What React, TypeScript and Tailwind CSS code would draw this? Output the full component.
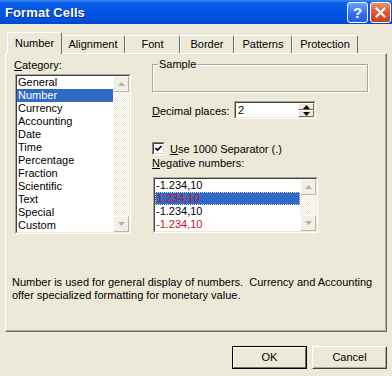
import React from "react";

const tabs = ["Number", "Alignment", "Font", "Border", "Patterns", "Protection"];
const tabWidths = ["w-[55px]", "w-[63px]", "w-[55px]", "w-[54px]", "w-[58px]", "w-[66px]"];
const categories = [
  "General",
  "Number",
  "Currency",
  "Accounting",
  "Date",
  "Time",
  "Percentage",
  "Fraction",
  "Scientific",
  "Text",
  "Special",
  "Custom",
];

function Sunken({ className, children }: { className: string; children: React.ReactNode }) {
  return (
    <div className={`border border-t-[#aca899] border-l-[#aca899] border-r-white border-b-white ${className}`}>
      <div className="h-full border border-t-[#404040] border-l-[#404040] border-r-[#ece9d8] border-b-[#ece9d8] bg-white flex">
        {children}
      </div>
    </div>
  );
}

function Arrow({ up, color }: { up?: boolean; color: string }) {
  return (
    <svg width="7" height="4" viewBox="0 0 7 4">
      <path d={up ? "M3.5 0 L7 4 L0 4 Z" : "M0 0 L7 0 L3.5 4 Z"} fill={color} />
    </svg>
  );
}

function ScrollBtn({ up }: { up?: boolean }) {
  return (
    <div className="w-[16px] h-[16px] bg-[#f2f0e6] border border-t-[#fdfdfb] border-l-[#fdfdfb] border-r-[#b9b7aa] border-b-[#b9b7aa] flex items-center justify-center">
      <Arrow up={up} color="#b5b2a4" />
    </div>
  );
}

function ScrollBar() {
  return (
    <div className="w-[16px] h-full flex flex-col justify-between bg-[repeating-conic-gradient(#ece9d8_0_25%,#ffffff_0_50%)] bg-[length:2px_2px]">
      <ScrollBtn up />
      <ScrollBtn />
    </div>
  );
}

export default function App() {
  return (
    <div
      className="w-[392px] h-[376px] bg-[#ece9d8] overflow-hidden text-[11px] leading-[13px] text-black"
      style={{ fontFamily: '"Liberation Sans", Arial, sans-serif' }}
    >
      {/* title bar */}
      <div className="h-[24px] flex items-center justify-between pl-[5px] pr-[1px] bg-[linear-gradient(to_bottom,#3d8cf5_0%,#0a5ee8_12%,#0055e5_50%,#0150dd_85%,#0146c9_100%)]">
        <span className="text-white font-bold text-[13px] tracking-[0.1px] [text-shadow:1px_1px_0_#0a2a80]">
          Format Cells
        </span>
        <div className="flex gap-[2px]">
          <div className="w-[21px] h-[21px] rounded-[3px] border border-white bg-[linear-gradient(to_bottom,#6aa2ff,#2c6cf0_60%,#2a5fe0)] flex items-center justify-center text-white font-bold text-[15px] leading-none">
            ?
          </div>
          <div className="w-[21px] h-[21px] rounded-[3px] border border-white bg-[linear-gradient(to_bottom,#f08f6c,#e0542f_55%,#c8401c)] flex items-center justify-center">
            <svg width="11" height="11" viewBox="0 0 11 11">
              <path d="M1.5 1.5 L9.5 9.5 M9.5 1.5 L1.5 9.5" stroke="white" strokeWidth="2.2" strokeLinecap="square" />
            </svg>
          </div>
        </div>
      </div>

      {/* tabs */}
      <div className="flex items-end pl-[7px] mt-[8px] h-[21px] relative z-10">
        {tabs.map((t, i) =>
          i === 0 ? (
            <div
              key={t}
              className={`${tabWidths[i]} h-[22px] -mb-[1px] bg-[#ece9d8] border-l border-t border-white border-r border-r-[#716f64] rounded-t-[2px] flex items-center justify-center pb-[1px]`}
            >
              {t}
            </div>
          ) : (
            <div
              key={t}
              className={`${tabWidths[i]} h-[18px] border-t border-white border-r border-r-[#716f64] rounded-tr-[2px] flex items-center justify-center ${i === 1 ? "" : "border-l border-l-white"}`}
            >
              {t}
            </div>
          )
        )}
      </div>

      {/* panel */}
      <div className="ml-[5px] w-[382px] h-[279px] border border-t-white border-l-white border-r-[#716f64] border-b-[#716f64] shadow-[inset_-1px_-1px_0_#aca899]">
        <div className="flex h-[181px]">
          {/* left column */}
          <div className="flex flex-col pl-[8px] pt-[5px] w-[146px]">
            <div className="h-[13px]">
              <span className="underline">C</span>ategory:
            </div>
            <Sunken className="mt-[2px] ml-[1px] w-[116px] h-[160px]">
              <div className="flex-1 flex flex-col">
                {categories.map((c, i) => (
                  <div
                    key={c}
                    className={`h-[13px] pl-[1px] whitespace-nowrap ${i === 1 ? "bg-[#316ac5] text-white" : ""}`}
                  >
                    {c}
                  </div>
                ))}
              </div>
              <ScrollBar />
            </Sunken>
          </div>

          {/* right column */}
          <div className="flex flex-col w-[216px]">
            <div className="relative mt-[10px] h-[28px] border border-[#aca899] shadow-[1px_1px_0_#ffffff,inset_1px_1px_0_#ffffff]">
              <span className="absolute -top-[7px] left-[5px] bg-[#ece9d8] px-[1px]">Sample</span>
            </div>

            <div className="flex items-center mt-[9px] h-[18px]">
              <div className="w-[82px] pt-[3px]">
                <span className="underline">D</span>ecimal places:
              </div>
              <Sunken className="w-[82px] h-[18px]">
                <div className="flex-1 pl-[2px] leading-[14px]">2</div>
                <div className="w-[16px] flex flex-col">
                  <div className="h-[7px] bg-[#ece9d8] border border-t-white border-l-white border-r-[#716f64] border-b-[#716f64] flex items-center justify-center">
                    <Arrow up color="#000" />
                  </div>
                  <div className="h-[7px] bg-[#ece9d8] border border-t-white border-l-white border-r-[#716f64] border-b-[#716f64] flex items-center justify-center">
                    <Arrow color="#000" />
                  </div>
                </div>
              </Sunken>
            </div>

            <div className="flex items-center mt-[23px] h-[13px]">
              <div className="w-[13px] h-[13px] border border-t-[#808080] border-l-[#808080] border-r-white border-b-white">
                <div className="w-full h-full bg-white border border-t-[#404040] border-l-[#404040] border-r-[#d4d0c8] border-b-[#d4d0c8] flex items-center justify-center">
                  <svg width="7" height="7" viewBox="0 0 7 7">
                    <path d="M0.5 3 L2.5 5 L6.5 1" stroke="#000" strokeWidth="1.6" fill="none" />
                  </svg>
                </div>
              </div>
              <div className="ml-[5px] pt-[1px]">
                <span className="underline">U</span>se 1000 Separator (.)
              </div>
            </div>

            <div className="mt-[2px] h-[13px]">
              <span className="underline">N</span>egative numbers:
            </div>

            <Sunken className="mt-[7px] ml-[1px] w-[165px] h-[56px]">
              <div className="flex-1 flex flex-col">
                <div className="h-[13px] pl-[1px]">-1.234,10</div>
                <div className="h-[13px] pl-[1px] bg-[#316ac5] text-[#cc1020] border border-dotted border-[#e0e0e0] leading-[11px]">
                  1.234,10
                </div>
                <div className="h-[13px] pl-[1px]">-1.234,10</div>
                <div className="h-[13px] pl-[1px] text-[#cc1020]">-1.234,10</div>
              </div>
              <ScrollBar />
            </Sunken>
          </div>
        </div>

        <div className="ml-[6px] mt-[41px]">
          Number is used for general display of numbers.&nbsp; Currency and Accounting
          <br />
          offer specialized formatting for monetary value.
        </div>
      </div>

      {/* buttons */}
      <div className="flex justify-end gap-[5px] pr-[5px] mt-[14px]">
        <div className="w-[75px] h-[23px] border border-black">
          <div className="h-full border border-t-white border-l-white border-r-[#716f64] border-b-[#716f64] flex items-center justify-center">
            OK
          </div>
        </div>
        <div className="w-[75px] h-[23px] border border-t-white border-l-white border-r-[#404040] border-b-[#404040]">
          <div className="h-full border border-t-[#ece9d8] border-l-[#ece9d8] border-r-[#aca899] border-b-[#aca899] flex items-center justify-center">
            Cancel
          </div>
        </div>
      </div>
    </div>
  );
}
